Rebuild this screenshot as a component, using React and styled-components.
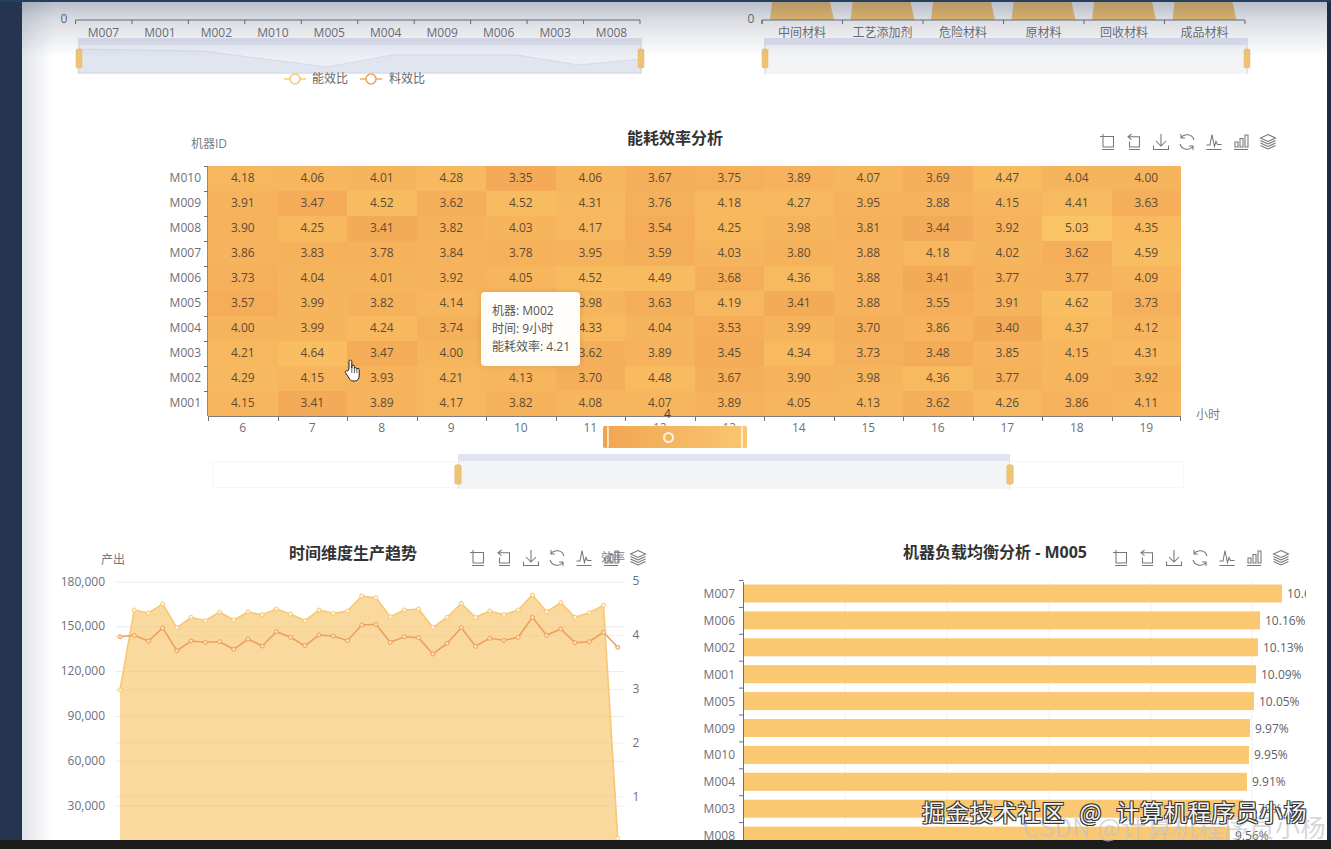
import React from "react";
import styled, { createGlobalStyle } from "styled-components";

const FONT = `"Open Sans", "Noto Sans CJK SC", sans-serif`;

const Global = createGlobalStyle`
  html, body { margin: 0; padding: 0; background: #1c1c1c; }
  body { font-family: ${FONT}; }
`;

const Shell = styled.div`
  position: relative;
  width: 1331px;
  height: 849px;
  overflow: hidden;
  display: flex;
  flex-direction: column;
  background: #1c1c1c;
`;
const TopStrip = styled.div`height: 2px; flex: none; background: #25405f;`;
const Middle = styled.div`flex: 1; min-height: 0; display: flex;`;
const LeftRail = styled.div`width: 22px; flex: none; background: #26354f;`;
const RightRail = styled.div`width: 4px; flex: none; background: #1f2c44;`;
const BottomBar = styled.div`height: 9px; flex: none; background: #1c1c1c;`;
const Content = styled.main`
  position: relative;
  flex: 1;
  min-width: 0;
  display: flex;
  flex-direction: column;
  overflow: hidden;
  background: #fff;
`;
const Shade = styled.div`
  position: absolute;
  inset: 0;
  pointer-events: none;
  background:
    linear-gradient(180deg, rgba(50, 65, 95, 0.34), rgba(50, 65, 95, 0.18) 18px, rgba(50, 65, 95, 0) 55px),
    linear-gradient(90deg, rgba(45, 65, 100, 0.14), rgba(45, 65, 100, 0) 32px);
`;
const Row = styled.section`
  display: flex;
  flex: none;
  height: ${(p) => p.$h}px;
`;
const ChartCanvas = styled.svg`
  display: block;
  flex: none;
  width: ${(p) => p.$w}px;
  height: ${(p) => p.$h}px;
`;
const AxisText = styled.text`
  font-family: ${FONT};
  font-size: 12px;
  fill: ${(p) => p.$fill || "#6e7079"};
  text-anchor: ${(p) => p.$anchor || "middle"};
  dominant-baseline: central;
`;

/* ---------- chart head ---------- */
const Panel = styled.div`
  position: relative;
  flex: none;
  width: ${(p) => p.$w}px;
`;
const Head = styled.header`
  display: grid;
  grid-template-columns: ${(p) => p.$cols};
  align-items: end;
  height: ${(p) => p.$h}px;
  padding-left: ${(p) => p.$pad}px;
  box-sizing: border-box;
`;
const AxisName = styled.div`
  font-size: 12px;
  line-height: 16px;
  color: #7a7c84;
  margin-bottom: ${(p) => p.$mb}px;
  white-space: nowrap;
`;
const Title = styled.h2`
  margin: 0 0 ${(p) => p.$mb}px;
  font: 700 16px/20px ${FONT};
  color: #333;
  text-align: center;
  white-space: nowrap;
`;
const Toolbar = styled.div`
  position: relative;
  display: flex;
  gap: 8.75px;
  margin-left: ${(p) => p.$ml}px;
  margin-bottom: ${(p) => p.$mb}px;
`;
const ToolIcon = styled.svg`
  display: block;
  width: 18px;
  height: 18px;
  fill: none;
  stroke: #74767b;
  stroke-width: 1.05;
`;
const OverlapTag = styled.span`
  position: absolute;
  left: 133px;
  top: 1px;
  font-size: 12px;
  line-height: 16px;
  color: #7a7c84;
  white-space: nowrap;
`;

const ICONS = [
  "M5 1v13 M2 3.5h13.5V14H5 M4 16.5h12",
  "M6.5 1L3 3.8l3.5 2.8 M3 3.8h11.5V14H4.5V8.5 M4 16.5h11",
  "M9 1v12 M4 8l5 5 5-5 M1.5 12.5v4h15v-4",
  "M16 7A7.5 7.5 0 0 0 3 4.5 M3 1v4h4 M2 11A7.5 7.5 0 0 0 15 13.5 M15 17v-4h-4",
  "M1.5 16.5h15 M1.5 12h3.5l2-10.5 2.4 12 1.6-5 1.5 3h4",
  "M2 16.5h14 M3 9h3v5H3z M8 5.5h3V14H8z M13 2h3v12h-3z",
  "M9 1.5l7.5 3.5L9 8.5 1.5 5z M1.5 7.5L9 11l7.5-3.5 M1.5 10L9 13.5l7.5-3.5 M1.5 12.5L9 16l7.5-3.5",
];
const Tools = ({ ml, mb, children }) => (
  <Toolbar $ml={ml} $mb={mb}>
    {ICONS.map((d, i) => (
      <ToolIcon key={i} viewBox="0 0 18 18"><path d={d} /></ToolIcon>
    ))}
    {children}
  </Toolbar>
);

/* ---------- top fragments ---------- */
const MACHINES = ["M007", "M001", "M002", "M010", "M005", "M004", "M009", "M006", "M003", "M008"];
const MATERIALS = ["中间材料", "工艺添加剂", "危险材料", "原材料", "回收材料", "成品材料"];

const Handle = ({ x, y = 49, h = 19 }) => (
  <g>
    <line x1={x} x2={x} y1={45} y2={74} stroke="#d5d8e2" />
    <rect x={x - 3} y={y} width={6} height={h} rx={1.5} fill="#eec474" stroke="#e3b86c" strokeWidth=".5" />
  </g>
);

const TopLeft = () => {
  const step = 56.45;
  return (
    <ChartCanvas $w={643} $h={90} viewBox="22 2 643 90">
      <AxisText x={64} y={18}>0</AxisText>
      <path d="M75.5 24v-4H640v4" fill="none" stroke="#6e7079" />
      {MACHINES.map((m, i) => (
        <g key={m}>
          <line x1={75.5 + step * i} x2={75.5 + step * i} y1={20} y2={24} stroke="#6e7079" />
          <AxisText x={103.5 + step * i} y={32}>{m}</AxisText>
        </g>
      ))}
      <rect x={78} y={38} width={564} height={7} fill="#e0e3f0" />
      <rect x={78} y={45} width={564} height={29} fill="#edeff5" />
      <path d="M78 49L203 51 327 67 392 55 517 55 579 65 641 59V73H78Z" fill="#e1e5f0" stroke="#ced3e4" strokeWidth=".7" />
      <Handle x={79} />
      <Handle x={641} />
      <line x1={284} x2={306} y1={79} y2={79} stroke="#f9c971" strokeWidth="1.4" />
      <circle cx={295} cy={79} r={5} fill="#fff" stroke="#f9c971" strokeWidth="1.6" />
      <AxisText x={312} y={78} $anchor="start" $fill="#666">能效比</AxisText>
      <line x1={360} x2={382} y1={79} y2={79} stroke="#eea55e" strokeWidth="1.4" />
      <circle cx={371} cy={79} r={5} fill="#fff" stroke="#eea55e" strokeWidth="1.6" />
      <AxisText x={389} y={78} $anchor="start" $fill="#666">料效比</AxisText>
    </ChartCanvas>
  );
};

const TopRight = () => {
  const step = 80.5;
  return (
    <ChartCanvas $w={662} $h={90} viewBox="665 2 662 90">
      <AxisText x={751} y={18}>0</AxisText>
      {MATERIALS.map((m, i) => {
        const x = 770 + step * i;
        return <path key={m} d={`M${x + 2} 2H${x + 60}L${x + 64} 20H${x}Z`} fill="#fbc76c" />;
      })}
      <path d="M762 24v-4H1245v4" fill="none" stroke="#6e7079" />
      {MATERIALS.map((m, i) => (
        <g key={m}>
          <line x1={762 + step * i} x2={762 + step * i} y1={20} y2={24} stroke="#6e7079" />
          <AxisText x={802 + step * i} y={32}>{m}</AxisText>
        </g>
      ))}
      <rect x={764} y={38} width={484} height={7} fill="#e0e3f0" />
      <rect x={764} y={45} width={484} height={29} fill="#f3f4f5" />
      <Handle x={765} />
      <Handle x={1247} />
    </ChartCanvas>
  );
};

/* ---------- heatmap ---------- */
const HOURS = [6, 7, 8, 9, 10, 11, 12, 13, 14, 15, 16, 17, 18, 19];
const HEAT = [
  ["M010", "4.18 4.06 4.01 4.28 3.35 4.06 3.67 3.75 3.89 4.07 3.69 4.47 4.04 4.00"],
  ["M009", "3.91 3.47 4.52 3.62 4.52 4.31 3.76 4.18 4.27 3.95 3.88 4.15 4.41 3.63"],
  ["M008", "3.90 4.25 3.41 3.82 4.03 4.17 3.54 4.25 3.98 3.81 3.44 3.92 5.03 4.35"],
  ["M007", "3.86 3.83 3.78 3.84 3.78 3.95 3.59 4.03 3.80 3.88 4.18 4.02 3.62 4.59"],
  ["M006", "3.73 4.04 4.01 3.92 4.05 4.52 4.49 3.68 4.36 3.88 3.41 3.77 3.77 4.09"],
  ["M005", "3.57 3.99 3.82 4.14 4.02 3.98 3.63 4.19 3.41 3.88 3.55 3.91 4.62 3.73"],
  ["M004", "4.00 3.99 4.24 3.74 4.06 4.33 4.04 3.53 3.99 3.70 3.86 3.40 4.37 4.12"],
  ["M003", "4.21 4.64 3.47 4.00 3.92 3.62 3.89 3.45 4.34 3.73 3.48 3.85 4.15 4.31"],
  ["M002", "4.29 4.15 3.93 4.21 4.13 3.70 4.48 3.67 3.90 3.98 4.36 3.77 4.09 3.92"],
  ["M001", "4.15 3.41 3.89 4.17 3.82 4.08 4.07 3.89 4.05 4.13 3.62 4.26 3.86 4.11"],
];
const heatColor = (v) => {
  const t = Math.min(1, Math.max(0, (v - 3.35) / 1.68));
  const a = [244, 170, 88], b = [250, 196, 100];
  return `rgb(${a.map((c, i) => Math.round(c + (b[i] - c) * t)).join(",")})`;
};

const HeatBody = styled.div`
  display: flex;
  height: 250px;
`;
const RowLabels = styled.div`
  width: 186px;
  flex: none;
  display: grid;
  grid-template-rows: repeat(10, 25px);
`;
const RowLabel = styled.div`
  position: relative;
  font-size: 12px;
  line-height: 24px;
  text-align: right;
  padding-right: 7px;
  color: #6e7079;
  &::after {
    content: "";
    position: absolute;
    right: 0;
    top: 0;
    width: 4px;
    border-top: 1px solid #6e7079;
  }
`;
const HeatGrid = styled.div`
  width: 973px;
  flex: none;
  display: grid;
  grid-template-columns: repeat(14, 1fr);
  grid-template-rows: repeat(10, 25px);
  border-left: 1px solid #8a8c90;
  margin-left: -1px;
`;
const HeatCell = styled.div.attrs((p) => ({ style: { backgroundColor: p.$fill } }))`
  font-size: 12px;
  line-height: 24px;
  text-align: center;
  color: #5f4c35;
`;
const AxisEnd = styled.div`
  align-self: flex-end;
  margin: 0 0 -7px 15px;
  font-size: 12px;
  line-height: 16px;
  color: #7a7c84;
`;
const XAxis = styled.div`
  width: 973px;
  height: 30px;
  margin-left: 186px;
  display: grid;
  grid-template-columns: repeat(14, 1fr);
  border-top: 1px solid #7b7d84;
  box-sizing: border-box;
`;
const XTick = styled.div`
  position: relative;
  font-size: 12px;
  line-height: 16px;
  padding-top: 3px;
  text-align: center;
  color: #6e7079;
  &::before, &:last-child::after {
    content: "";
    position: absolute;
    top: 0;
    left: 0;
    height: 4px;
    border-left: 1px solid #6e7079;
  }
  &:last-child::after { left: auto; right: 0; }
`;
const SliderTrack = styled.div`
  display: grid;
  grid-template-columns: 245px 552px 1fr;
  width: 972px;
  height: 27px;
  margin: 15px 0 0 190px;
  box-sizing: border-box;
  border: 1px solid #f5f6f7;
  border-radius: 2px;
`;
const SliderWindow = styled.div`
  grid-column: 2;
  position: relative;
  margin-top: -8px;
  height: 35px;
  border-top: 7px solid #e0e3f0;
  border-left: 1px solid #e2e4ea;
  border-right: 1px solid #e2e4ea;
  box-sizing: border-box;
  background: #f3f4f5;
`;
const SliderHandle = styled.span`
  position: absolute;
  top: 4px;
  ${(p) => (p.$end ? "right: -4px;" : "left: -4px;")}
  width: 6px;
  height: 19px;
  border-radius: 2px;
  background: #eec474;
  box-shadow: 0 0 0 0.5px #dcb56c;
`;
const Tooltip = styled.div`
  position: absolute;
  left: 459px;
  top: 200px;
  width: 99px;
  height: 74px;
  box-sizing: border-box;
  padding: 10px 0 0 11px;
  background: #fffdfa;
  border-radius: 4px;
  box-shadow: 0 0 6px rgba(150, 110, 50, 0.25);
  font-size: 12px;
  line-height: 18px;
  color: #555;
  white-space: nowrap;
`;
const VisualBar = styled.div`
  position: absolute;
  left: 581px;
  top: 334px;
  width: 144px;
  height: 22px;
  border-radius: 3px;
  background: linear-gradient(90deg, #f2a552, #f9c66f);
  box-shadow: 0 0 3px rgba(255, 255, 255, 0.9);
  &::before, &::after {
    content: "";
    position: absolute;
    top: 0;
    bottom: 0;
    width: 4px;
    border-radius: 2px;
  }
  &::before { left: 0; background: #f0a250; border-right: 2px solid #fbe0b4; }
  &::after { right: 0; background: #f9c66f; border-left: 2px solid #fdeccb; }
`;
const VisualRing = styled.span`
  position: absolute;
  left: 60px;
  top: 6px;
  width: 7px;
  height: 7px;
  border: 2px solid #fdf3de;
  border-radius: 50%;
`;
const VisualValue = styled.span`
  position: absolute;
  left: 61px;
  top: -20px;
  font-size: 12px;
  line-height: 16px;
  color: #444;
`;
const Pointer = styled.svg`
  position: absolute;
  left: 322px;
  top: 267px;
  width: 18px;
  height: 23px;
`;

const Heatmap = () => (
  <Panel $w={1305}>
    <Head $h={74} $pad={169} $cols="184px 600px auto">
      <AxisName $mb={14}>机器ID</AxisName>
      <Title $mb={18}>能耗效率分析</Title>
      <Tools ml={123} mb={15} />
    </Head>
    <HeatBody>
      <RowLabels>
        {HEAT.map(([m]) => <RowLabel key={m}>{m}</RowLabel>)}
      </RowLabels>
      <HeatGrid>
        {HEAT.flatMap(([m, vals]) =>
          vals.split(" ").map((v, i) => (
            <HeatCell key={m + i} $fill={heatColor(parseFloat(v))}>{v}</HeatCell>
          ))
        )}
      </HeatGrid>
      <AxisEnd>小时</AxisEnd>
    </HeatBody>
    <XAxis>
      {HOURS.map((h) => <XTick key={h}>{h}</XTick>)}
    </XAxis>
    <SliderTrack>
      <SliderWindow>
        <SliderHandle />
        <SliderHandle $end />
      </SliderWindow>
    </SliderTrack>
    <Tooltip>
      机器: M002<br />时间: 9小时<br />能耗效率: 4.21
    </Tooltip>
    <VisualBar>
      <VisualValue>4</VisualValue>
      <VisualRing />
    </VisualBar>
    <Pointer viewBox="0 0 18 23">
      <path
        d="M5 10V2.5a1.4 1.4 0 0 1 2.8 0V9V7.5a1.3 1.3 0 0 1 2.6 0V9.5a1.3 1.3 0 0 1 2.4 0v1a1.2 1.2 0 0 1 2.4 0V17c0 2.5-1.6 5-4.5 5H9c-2 0-3-1-4-3L1.4 13.6c-.8-1.4 1.2-2.6 2.2-1.4z"
        fill="#fff"
        stroke="#222"
        strokeWidth="1"
      />
      <path d="M7.8 9v5 M10.4 9.5V14 M12.8 10.5V14" stroke="#222" strokeWidth=".7" fill="none" />
    </Pointer>
  </Panel>
);

/* ---------- production trend ---------- */
const AREA_Z = [480,240,249,222,293,262,272,246,270,246,254,237,252,272,240,250,243,198,203,260,240,237,292,262,220,262,243,254,240,195,245,218,262,248,226,925];
const LINE_Z = [320,316,333,294,362,333,337,335,358,327,348,305,322,347,315,318,332,285,283,337,320,323,372,340,293,349,325,331,322,262,316,297,338,335,307,352];
const px = (i) => 120 + i * 14.22;
const py = (z) => 530 + z / 3;
const toPath = (arr) => arr.map((z, i) => `${i ? "L" : "M"}${px(i).toFixed(1)} ${py(z).toFixed(1)}`).join("");

const LEFT_TICKS = ["180,000", "150,000", "120,000", "90,000", "60,000", "30,000"];
const RIGHT_TICKS = ["5", "4", "3", "2", "1"];

const TrendChart = () => (
  <ChartCanvas $w={643} $h={268} viewBox="22 572 643 268">
    {LEFT_TICKS.map((t, i) => (
      <g key={t}>
        <line x1={115} x2={625} y1={582 + i * 44.8} y2={582 + i * 44.8} stroke="#e8eaee" />
        <AxisText x={105} y={581 + i * 44.8} $anchor="end">{t}</AxisText>
      </g>
    ))}
    {RIGHT_TICKS.map((t, i) => (
      <g key={t}>
        {i > 0 && <line x1={115} x2={625} y1={582 + i * 53.7} y2={582 + i * 53.7} stroke="#eef0f3" />}
        <AxisText x={636} y={580 + i * 54}>{t}</AxisText>
      </g>
    ))}
    <path d={`${toPath(AREA_Z)}V840H120Z`} fill="#f6c56b" fillOpacity=".66" />
    <path d={toPath(AREA_Z)} fill="none" stroke="#f7c873" strokeWidth="1.6" />
    <path d={toPath(LINE_Z)} fill="none" stroke="#ee9f5b" strokeWidth="1.6" />
    {AREA_Z.map((z, i) => (
      <circle key={i} cx={px(i)} cy={py(z)} r={2} fill="#fff4dd" stroke="#f7c873" />
    ))}
    {LINE_Z.map((z, i) => (
      <circle key={i} cx={px(i)} cy={py(z)} r={2} fill="#fbe0b8" stroke="#ee9f5b" />
    ))}
  </ChartCanvas>
);

/* ---------- load balance ---------- */
const LOADS = [
  ["M007", 1282, "10.61%"],
  ["M006", 1260, "10.16%"],
  ["M002", 1258, "10.13%"],
  ["M001", 1256, "10.09%"],
  ["M005", 1254, "10.05%"],
  ["M009", 1250, "9.97%"],
  ["M010", 1249, "9.95%"],
  ["M004", 1247, "9.91%"],
  ["M003", 1243, "9.72%"],
  ["M008", 1230, "9.56%"],
];

const LoadChart = () => (
  <ChartCanvas $w={662} $h={268} viewBox="665 572 662 268">
    <defs>
      <clipPath id="load-clip"><rect x={665} y={572} width={641} height={268} /></clipPath>
    </defs>
    {[845, 947, 1049, 1151, 1252].map((x) => (
      <line key={x} x1={x} x2={x} y1={582} y2={840} stroke="#eff0f3" />
    ))}
    <line x1={743.5} x2={743.5} y1={582} y2={840} stroke="#6e7079" />
    {LOADS.map(([m, end, pct], i) => {
      const cy = 593.5 + i * 26.9;
      return (
        <g key={m} clipPath="url(#load-clip)">
          <line x1={739} x2={743.5} y1={cy - 13} y2={cy - 13} stroke="#6e7079" />
          <rect x={744} y={cy - 9} width={end - 744} height={18} fill="#f9c870" />
          <AxisText x={735} y={cy} $anchor="end">{m}</AxisText>
          <AxisText x={end + 5} y={cy} $anchor="start" $fill="#5f6168">{pct}</AxisText>
        </g>
      );
    })}
  </ChartCanvas>
);

/* ---------- watermarks ---------- */
const MarkPrimary = styled.div`
  position: absolute;
  left: 922px;
  top: 796px;
  font: 400 23px/30px "Noto Sans CJK SC", sans-serif;
  letter-spacing: 0.9px;
  word-spacing: 8px;
  color: #f4f4f4;
  white-space: nowrap;
  text-shadow: -1px -1px 0 #333, 1px -1px 0 #333, -1px 1px 0 #333, 1px 1px 0 #333;
`;
const MarkSecondary = styled.div`
  position: absolute;
  left: 1023px;
  top: 810px;
  font: 400 25px/32px "Noto Sans CJK SC", sans-serif;
  letter-spacing: 0.6px;
  color: rgba(195, 195, 200, 0.68);
  white-space: nowrap;
`;

export default function App() {
  return (
    <>
      <Global />
      <Shell>
        <TopStrip />
        <Middle>
          <LeftRail />
          <Content>
            <Row $h={90}>
              <TopLeft />
              <TopRight />
            </Row>
            <Row $h={408}>
              <Heatmap />
            </Row>
            <Row $h={340}>
              <Panel $w={643}>
                <Head $h={72} $pad={79} $cols="152px 200px auto">
                  <AxisName $mb={4}>产出</AxisName>
                  <Title $mb={9}>时间维度生产趋势</Title>
                  <Tools ml={15} mb={5}>
                    <OverlapTag>效率</OverlapTag>
                  </Tools>
                </Head>
                <TrendChart />
              </Panel>
              <Panel $w={662}>
                <Head $h={72} $pad={0} $cols="230px 200px auto">
                  <span />
                  <Title $mb={10}>机器负载均衡分析 - M005</Title>
                  <Tools ml={16} mb={5} />
                </Head>
                <LoadChart />
              </Panel>
            </Row>
            <Shade />
          </Content>
          <RightRail />
        </Middle>
        <BottomBar />
        <MarkSecondary>CSDN @计算机程序员小杨</MarkSecondary>
        <MarkPrimary>掘金技术社区 @ 计算机程序员小杨</MarkPrimary>
      </Shell>
    </>
  );
}
